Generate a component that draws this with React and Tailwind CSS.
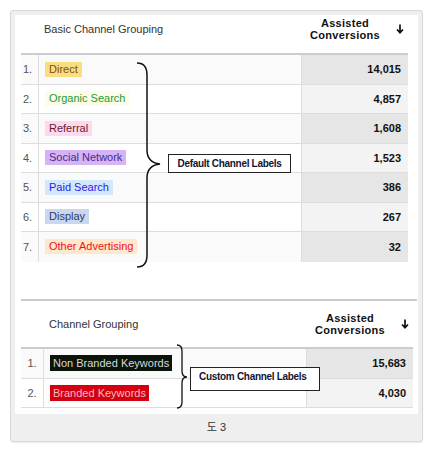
const basic = [
  { n: "1.", label: "Direct", pill: "bg-[#f7df80] text-[#8b4a1a]", value: "14,015" },
  { n: "2.", label: "Organic Search", pill: "bg-[#fbfde6] text-[#1f9a3a]", value: "4,857" },
  { n: "3.", label: "Referral", pill: "bg-[#fcd9f0] text-[#6a1a2a]", value: "1,608" },
  { n: "4.", label: "Social Network", pill: "bg-[#d6b3f7] text-[#4a2a8a]", value: "1,523" },
  { n: "5.", label: "Paid Search", pill: "bg-[#d3e8fc] text-[#2a1aee]", value: "386" },
  { n: "6.", label: "Display", pill: "bg-[#cbd7f0] text-[#2a3a5a]", value: "267" },
  { n: "7.", label: "Other Advertising", pill: "bg-[#fde8cc] text-[#ee1020]", value: "32" },
];

const custom = [
  { n: "1.", label: "Non Branded Keywords", pill: "bg-[#0a140a] text-[#d8d8d8]", value: "15,683" },
  { n: "2.", label: "Branded Keywords", pill: "bg-[#d40010] text-[#f4bcbc]", value: "4,030" },
];

function DownArrow() {
  return (
    <svg width="8" height="10" viewBox="0 0 8 10" className="shrink-0">
      <path d="M4 0.5 V8.5 M1 5.5 L4 8.7 L7 5.5" fill="none" stroke="#111" strokeWidth="1.7" />
    </svg>
  );
}

function ValueHeader() {
  return (
    <div className="flex h-full items-center justify-end pr-[4px]">
      <div className="text-center text-[11px] font-bold leading-[12px] tracking-[0.3px] text-[#111]">
        Assisted
        <br />
        Conversions
      </div>
      <div className="ml-[16px]">
        <DownArrow />
      </div>
    </div>
  );
}

function Row({ row, i, last, numCls, idxW }) {
  const odd = i % 2 === 0;
  return (
    <div className={`flex h-[29.5px] ${last ? "" : "border-b border-[#dddddd]"}`}>
      <div className={`${idxW} flex items-center border-r border-[#dddddd] text-[11px] text-[#555] ${numCls} ${odd ? "bg-[#fafafa]" : "bg-white"}`}>
        {row.n}
      </div>
      <div className={`flex flex-1 items-center pl-[6px] ${odd ? "bg-[#fafafa]" : "bg-white"}`}>
        <span className={`inline-block px-[4px] text-[11px] leading-[15px] ${row.pill}`}>{row.label}</span>
      </div>
      <div className={`flex w-[107px] items-center justify-end border-l border-[#dddddd] pr-[7px] text-[11px] font-bold text-[#111] ${odd ? "bg-[#e6e6e6]" : "bg-[#f3f3f3]"}`}>
        {row.value}
      </div>
    </div>
  );
}

export default function App() {
  return (
    <div className="relative h-[453px] w-[433px] bg-white font-['Liberation_Sans',Arial,'Noto_Sans_CJK_KR',sans-serif]">
      <div className="absolute left-[10px] top-[10px] w-[413px] rounded-[3px] border border-[#d8d8d8] bg-[#efefef] px-[4px] pt-[4px] shadow-[0_1px_1px_rgba(0,0,0,0.08)]">
        <div className="h-[399px] bg-white pl-[6px]">
          {/* basic grouping */}
          <div className="w-[387px]">
            <div className="flex h-[40px] border-b-2 border-[#cccccc] pb-[10px]">
              <div className="w-[18px]" />
              <div className="flex flex-1 items-center pl-[5px] text-[11px] text-[#333]">Basic Channel Grouping</div>
              <div className="w-[107px]">
                <ValueHeader />
              </div>
            </div>
            {basic.map((r, i) => (
              <Row key={r.n} row={r} i={i} last={i === basic.length - 1} idxW="w-[18px]" numCls="pl-[2px]" />
            ))}
          </div>

          {/* custom grouping */}
          <div className="mt-[37.5px] w-[396px] border-t-2 border-[#cccccc]">
            <div className="w-[392px]">
              <div className="flex h-[48px] border-b-2 border-[#cccccc]">
                <div className="w-[23px]" />
                <div className="flex flex-1 items-center pl-[5px] text-[11px] text-[#333]">Channel Grouping</div>
                <div className="w-[107px]">
                  <ValueHeader />
                </div>
              </div>
              {custom.map((r, i) => (
                <div key={r.n} className="flex h-[29.5px] border-b border-[#dddddd]">
                  <div className={`flex w-[23px] items-center justify-center border-r border-[#dddddd] text-[11px] text-[#555] ${i === 0 ? "bg-[#fafafa]" : "bg-white"}`}>
                    {r.n}
                  </div>
                  <div className={`flex flex-1 items-center pl-[6px] ${i === 0 ? "bg-[#fafafa]" : "bg-white"}`}>
                    <span className={`inline-block px-[3px] text-[11px] leading-[16px] ${r.pill}`}>{r.label}</span>
                  </div>
                  <div className={`flex w-[107px] items-center justify-end border-l border-[#dddddd] pr-[7px] text-[11px] font-bold text-[#111] ${i === 0 ? "bg-[#e6e6e6]" : "bg-[#f3f3f3]"}`}>
                    {r.value}
                  </div>
                </div>
              ))}
            </div>
          </div>
        </div>
        <div className="flex h-[27px] items-center justify-center text-[11px] text-[#333]">도 3</div>
      </div>

      {/* annotations */}
      <svg className="absolute left-[134px] top-[60px]" width="30" height="210" viewBox="0 0 30 210">
        <path
          d="M3 3 C10 3 13 8 13 15 V90 C13 98 17 103 26 104 C17 105 13 110 13 118 V195 C13 202 10 207 3 207"
          fill="none"
          stroke="#111"
          strokeWidth="1.5"
        />
      </svg>
      <div className="absolute left-[168px] top-[154px] flex h-[19px] w-[123px] items-center justify-center border border-[#222] bg-white text-[10px] font-bold tracking-[-0.3px] text-[#141432]">
        Default Channel Labels
      </div>

      <svg className="absolute left-[175px] top-[343px]" width="14" height="68" viewBox="0 0 14 68">
        <path
          d="M2 2 C5 2 7 4 7 8 V28 C7 32 9 34 12 34 C9 34 7 36 7 40 V59 C7 63 5 65 2 65"
          fill="none"
          stroke="#111"
          strokeWidth="1.3"
        />
      </svg>
      <div className="absolute left-[190px] top-[367px] h-[24px] w-[130px] border border-[#222] bg-white pl-[8px] pt-[2px] text-[10px] font-bold leading-[14px] tracking-[-0.3px] text-[#141432]">
        Custom Channel Labels
      </div>
    </div>
  );
}
